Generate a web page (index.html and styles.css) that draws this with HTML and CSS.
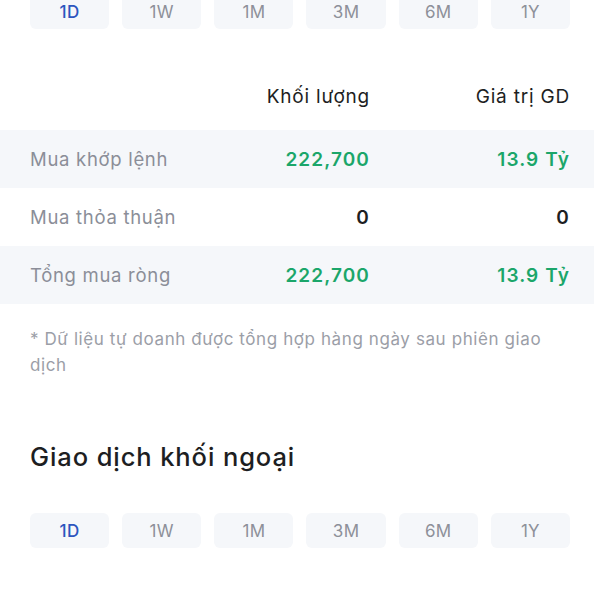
FILE: index.html
```html
<!DOCTYPE html>
<html lang="vi">
<head>
<meta charset="utf-8">
<link rel="stylesheet" href="styles.css">
</head>
<body>
<div class="page">
  <div class="tabs tabs-top">
    <div class="tab active">1D</div>
    <div class="tab">1W</div>
    <div class="tab">1M</div>
    <div class="tab">3M</div>
    <div class="tab">6M</div>
    <div class="tab">1Y</div>
  </div>

  <div class="table">
    <div class="row head">
      <div class="label"></div>
      <div class="col">Khối lượng</div>
      <div class="col">Giá trị GD</div>
    </div>
    <div class="row shaded">
      <div class="label">Mua khớp lệnh</div>
      <div class="col val green">222,700</div>
      <div class="col val green">13.9 Tỷ</div>
    </div>
    <div class="row">
      <div class="label">Mua thỏa thuận</div>
      <div class="col val">0</div>
      <div class="col val">0</div>
    </div>
    <div class="row shaded">
      <div class="label">Tổng mua ròng</div>
      <div class="col val green">222,700</div>
      <div class="col val green">13.9 Tỷ</div>
    </div>
  </div>

  <p class="note">* Dữ liệu tự doanh được tổng hợp hàng ngày sau phiên giao dịch</p>

  <h2 class="title">Giao dịch khối ngoại</h2>

  <div class="tabs">
    <div class="tab active">1D</div>
    <div class="tab">1W</div>
    <div class="tab">1M</div>
    <div class="tab">3M</div>
    <div class="tab">6M</div>
    <div class="tab">1Y</div>
  </div>
</div>
</body>
</html>
```

FILE: styles.css
```css
* { box-sizing: border-box; }
html, body { margin: 0; padding: 0; background: #fff; }
body {
  font-family: Inter, "Noto Sans", "DejaVu Sans", sans-serif;
  color: #1d1e22;
  width: 600px;
  height: 600px;
  overflow: hidden;
}
.tabs {
  display: grid;
  grid-template-columns: repeat(6, 1fr);
  gap: 13px;
  padding: 0 30px;
}
.tabs-top { margin-top: -6px; }
.tab {
  height: 35px;
  background: #f5f7fa;
  border-radius: 6px;
  display: flex;
  align-items: center;
  justify-content: center;
  font-size: 17px;
  letter-spacing: 0.3px;
  color: #8d9099;
}
.tab.active { color: #2d55bf; font-weight: 500; }

.table { margin-top: 49px; width: 594px; }
.row {
  display: grid;
  grid-template-columns: 1fr 140px 200px;
  align-items: center;
  height: 58px;
  padding: 0 24px 0 30px;
}
.row.head { height: 52px; align-items: start; padding-top: 7px; }
.row.shaded { background: #f5f7fa; }
.label { font-size: 18.5px; color: #8b8e98; letter-spacing: 0.7px; }
.col { text-align: right; font-size: 19px; letter-spacing: 0.8px; color: #1d1e22; }
.val { font-weight: 600; font-size: 19px; letter-spacing: 1.1px; }
.green { color: #1ba66a; }

.note {
  margin: 22px 30px 0;
  font-size: 17px;
  line-height: 26px;
  color: #9b9ea7;
  letter-spacing: 0.6px;
}
.title {
  margin: 64px 30px 0;
  font-size: 25.5px;
  font-weight: 500;
  line-height: 30px;
  letter-spacing: 0.9px;
  color: #1d1e22;
}
.title + .tabs { margin-top: 41px; }
```
